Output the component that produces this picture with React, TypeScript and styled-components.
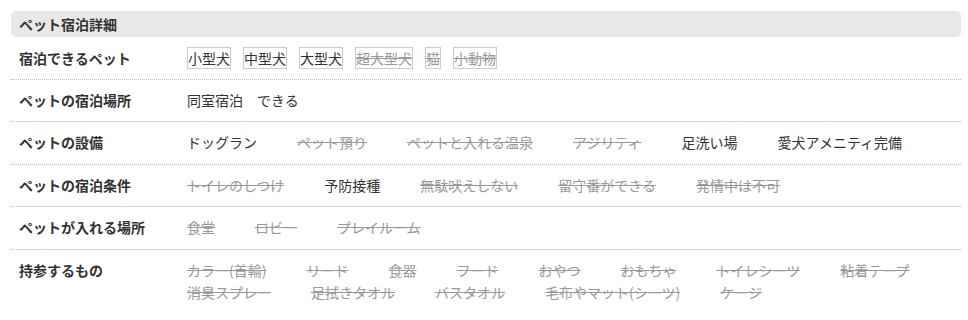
import React from "react";
import styled, { createGlobalStyle } from "styled-components";

const GlobalStyle = createGlobalStyle`
  body {
    margin: 0;
    background: #fff;
    font-family: "Noto Sans CJK JP", "Noto Sans", sans-serif;
    color: #333;
  }
`;

const Wrapper = styled.div`
  width: 950px;
  padding: 11px 0 0 11px;
`;

const SectionTitle = styled.h2`
  display: flex;
  align-items: center;
  height: 26px;
  margin: 0;
  padding: 0 8px;
  background-color: #e8e8e8;
  border-radius: 5px;
  font-size: 14px;
  font-weight: bold;
  color: #333;
`;

const Row = styled.div`
  display: grid;
  grid-template-columns: 168px 1fr;
  padding: 9px 0 10.6px 8px;
  border-bottom: 1px dotted #bbb;

  &:first-of-type {
    padding-top: 10px;
    padding-bottom: 9.6px;
  }

  &:last-child {
    border-bottom: none;
  }
`;

const Label = styled.div`
  font-size: 14px;
  font-weight: bold;
  line-height: 22px;
  color: #333;
`;

const ValueList = styled.div`
  display: flex;
  flex-wrap: wrap;
  column-gap: 40px;
  font-size: 14px;
  line-height: 22px;
`;

const Value = styled.span<{ $off?: boolean }>`
  color: ${(p) => (p.$off ? "#999" : "#333")};
  text-decoration: ${(p) => (p.$off ? "line-through" : "none")};
  white-space: nowrap;
`;

const TagList = styled.div`
  display: flex;
  gap: 12px;
  font-size: 14px;
`;

const Tag = styled.span<{ $off?: boolean }>`
  border: 1px solid #ccc;
  line-height: 20px;
  color: ${(p) => (p.$off ? "#999" : "#333")};
  text-decoration: ${(p) => (p.$off ? "line-through" : "none")};
`;

type Item = { name: string; off?: boolean };

const petTypes: Item[] = [
  { name: "小型犬" },
  { name: "中型犬" },
  { name: "大型犬" },
  { name: "超大型犬", off: true },
  { name: "猫", off: true },
  { name: "小動物", off: true },
];

const rows: { label: string; items: Item[] }[] = [
  {
    label: "ペットの宿泊場所",
    items: [{ name: "同室宿泊　できる" }],
  },
  {
    label: "ペットの設備",
    items: [
      { name: "ドッグラン" },
      { name: "ペット預り", off: true },
      { name: "ペットと入れる温泉", off: true },
      { name: "アジリティ", off: true },
      { name: "足洗い場" },
      { name: "愛犬アメニティ完備" },
    ],
  },
  {
    label: "ペットの宿泊条件",
    items: [
      { name: "トイレのしつけ", off: true },
      { name: "予防接種" },
      { name: "無駄吠えしない", off: true },
      { name: "留守番ができる", off: true },
      { name: "発情中は不可", off: true },
    ],
  },
  {
    label: "ペットが入れる場所",
    items: [
      { name: "食堂", off: true },
      { name: "ロビー", off: true },
      { name: "プレイルーム", off: true },
    ],
  },
  {
    label: "持参するもの",
    items: [
      { name: "カラー(首輪)", off: true },
      { name: "リード", off: true },
      { name: "食器", off: true },
      { name: "フード", off: true },
      { name: "おやつ", off: true },
      { name: "おもちゃ", off: true },
      { name: "トイレシーツ", off: true },
      { name: "粘着テープ", off: true },
      { name: "消臭スプレー", off: true },
      { name: "足拭きタオル", off: true },
      { name: "バスタオル", off: true },
      { name: "毛布やマット(シーツ)", off: true },
      { name: "ケージ", off: true },
    ],
  },
];

const App: React.FC = () => {
  return (
    <Wrapper>
      <GlobalStyle />
      <SectionTitle>ペット宿泊詳細</SectionTitle>
      <Row>
        <Label>宿泊できるペット</Label>
        <TagList>
          {petTypes.map((t) => (
            <Tag key={t.name} $off={t.off}>
              {t.name}
            </Tag>
          ))}
        </TagList>
      </Row>
      {rows.map((row) => (
        <Row key={row.label}>
          <Label>{row.label}</Label>
          <ValueList>
            {row.items.map((it) => (
              <Value key={it.name} $off={it.off}>
                {it.name}
              </Value>
            ))}
          </ValueList>
        </Row>
      ))}
    </Wrapper>
  );
};

export default App;
